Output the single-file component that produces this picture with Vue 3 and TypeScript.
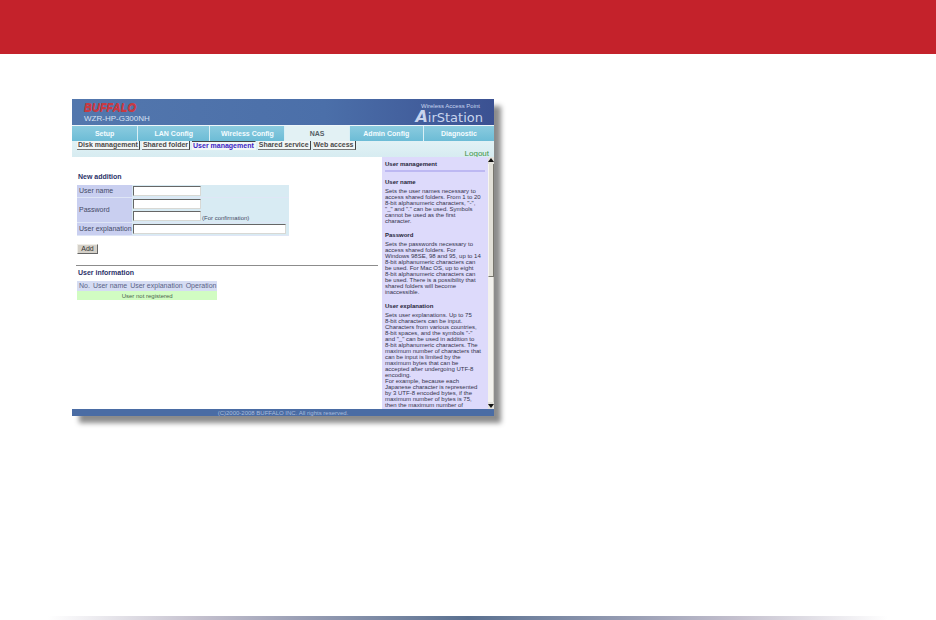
<script setup lang="ts">
import { ref } from 'vue'

interface HelpSection {
  title: string
  text: string
}

const tabs: string[] = ['Setup', 'LAN Config', 'Wireless Config', 'NAS', 'Admin Config', 'Diagnostic']
const activeTab = ref('NAS')

const pages: string[] = ['Disk management', 'Shared folder', 'User management', 'Shared service', 'Web access']
const activePage = ref('User management')

const columns: string[] = ['No.', 'User name', 'User explanation', 'Operation']

const userName = ref('')
const password = ref('')
const confirmation = ref('')
const explanation = ref('')

const help: HelpSection[] = [
  {
    title: 'User name',
    text: `Sets the user names necessary to
access shared folders. From 1 to 20
8-bit alphanumeric characters, "-",
"_" and "." can be used. Symbols
cannot be used as the first
character.`,
  },
  {
    title: 'Password',
    text: `Sets the passwords necessary to
access shared folders. For
Windows 98SE, 98 and 95, up to 14
8-bit alphanumeric characters can
be used. For Mac OS, up to eight
8-bit alphanumeric characters can
be used. There is a possibility that
shared folders will become
inaccessible.`,
  },
  {
    title: 'User explanation',
    text: `Sets user explanations. Up to 75
8-bit characters can be input.
Characters from various countries,
8-bit spaces, and the symbols "-"
and "_" can be used in addition to
8-bit alphanumeric characters. The
maximum number of characters that
can be input is limited by the
maximum bytes that can be
accepted after undergoing UTF-8
encoding.
For example, because each
Japanese character is represented
by 3 UTF-8 encoded bytes, if the
maximum number of bytes is 75,
then the maximum number of`,
  },
]
</script>

<template>
  <div class="page">
    <div class="banner"></div>
    <main class="content">
      <section class="window">
        <header class="head">
          <div class="brand">
            <strong class="buffalo">BUFFALO</strong>
            <span class="model">WZR-HP-G300NH</span>
          </div>
          <div class="product">
            <span class="tagline">Wireless Access Point</span>
            <span class="airstation"><i>A</i>irStation</span>
          </div>
        </header>
        <nav class="tabs">
          <a v-for="tab in tabs" :key="tab" href="#" :class="{ active: tab === activeTab }" @click.prevent="activeTab = tab">{{ tab }}</a>
        </nav>
        <div class="subbar">
          <nav class="pages">
            <a v-for="item in pages" :key="item" href="#" :class="{ active: item === activePage }" @click.prevent="activePage = item">{{ item }}</a>
          </nav>
          <a class="logout" href="#">Logout</a>
        </div>
        <div class="body">
          <div class="panel">
            <form @submit.prevent>
              <h2>New addition</h2>
              <table class="fields">
                <tbody>
                  <tr>
                    <th><label for="user-name">User name</label></th>
                    <td><div class="line"><input id="user-name" v-model="userName" type="text" /></div></td>
                  </tr>
                  <tr>
                    <th><label for="password">Password</label></th>
                    <td>
                      <div class="line"><input id="password" v-model="password" type="password" /></div>
                      <div class="line">
                        <input id="confirmation" v-model="confirmation" type="password" />
                        <label class="note" for="confirmation">(For confirmation)</label>
                      </div>
                    </td>
                  </tr>
                  <tr>
                    <th><label for="explanation">User explanation</label></th>
                    <td><div class="line"><input id="explanation" v-model="explanation" class="wide" type="text" /></div></td>
                  </tr>
                </tbody>
              </table>
              <button type="submit">Add</button>
            </form>
            <section class="info">
              <h2>User information</h2>
              <table class="users">
                <thead>
                  <tr><th v-for="column in columns" :key="column">{{ column }}</th></tr>
                </thead>
                <tbody>
                  <tr><td :colspan="columns.length">User not registered</td></tr>
                </tbody>
              </table>
            </section>
          </div>
          <aside class="help">
            <h2>User management</h2>
            <section v-for="section in help" :key="section.title">
              <h3>{{ section.title }}</h3>
              <p>{{ section.text }}</p>
            </section>
          </aside>
          <div class="scroll">
            <svg viewBox="0 0 6 7"><path d="M3 1 L6 5 H0 Z" /></svg>
            <div class="thumb"></div>
            <div class="track"></div>
            <svg viewBox="0 0 6 7"><path d="M3 6 L6 2 H0 Z" /></svg>
          </div>
        </div>
        <footer class="foot">(C)2000-2008 BUFFALO INC. All rights reserved.</footer>
      </section>
    </main>
    <div class="rule"></div>
  </div>
</template>

<style>
body {
  background: #fff;
}
</style>

<style scoped>
.page {
  min-height: 100vh;
  display: flex;
  flex-direction: column;
  font-family: "Liberation Sans", Arial, sans-serif;
  font-size: 7px;
  line-height: 8px;
  color: #444a66;
}
.page *,
.page {
  box-sizing: border-box;
}
a {
  text-decoration: none;
}
h2,
h3,
p {
  margin: 0;
}
h2 {
  font-size: 7px;
  line-height: 8px;
  color: #2b3168;
}
.banner {
  height: 54px;
  background: #c4222b;
}
.content {
  flex: 1;
  display: grid;
  grid-template-columns: 211fr 221fr;
  align-items: start;
  padding: 45px 0 45px 72px;
}
.window {
  background: #fff;
  box-shadow: 7px 7px 5px #8c8c8c;
}
.head {
  height: 26px;
  display: flex;
  justify-content: space-between;
  padding: 2px 11px 0 12px;
  background: linear-gradient(90deg, #5377ad, #4b6fa9 60%, #3b5192);
}
.brand,
.product {
  display: flex;
  flex-direction: column;
}
.buffalo {
  font-size: 11px;
  line-height: 12px;
  font-style: italic;
  color: #c83a42;
  text-shadow: 0 1px #c83a42;
}
.model {
  font-size: 8px;
  line-height: 11px;
  color: #d5e0f2;
}
.product {
  align-items: flex-end;
  color: #c8d4ee;
}
.tagline {
  font-size: 6px;
  line-height: 10px;
  padding-right: 3px;
}
.airstation {
  font-family: "DejaVu Sans", sans-serif;
  font-size: 13px;
  line-height: 12px;
}
.airstation i {
  font-size: 16px;
  font-weight: bold;
}
.tabs {
  height: 15px;
  display: grid;
  grid-template-columns: 66fr 72fr 75fr 64fr 74fr 71fr;
  column-gap: 1px;
  border-top: 1px solid #eef6fa;
  background: #d9eff5;
}
.tabs a {
  line-height: 15px;
  text-align: center;
  font-weight: bold;
  color: #f4fcff;
  background: linear-gradient(#8bcbdf, #6cbcd6);
}
.tabs a.active {
  color: #555e66;
  background: #e2f1f4;
}
.subbar {
  height: 17px;
  display: flex;
  flex-direction: column;
  padding: 1px 5px 0;
  background: linear-gradient(#e2f2f6, #d7ecf1);
}
.pages {
  display: flex;
  gap: 2px;
}
.pages a {
  height: 9px;
  padding: 0 1px;
  font-weight: bold;
  white-space: nowrap;
  color: #4a4a4a;
  background: #f2f6f6;
  border-right: 1px solid #444;
  border-bottom: 1px solid #777;
}
.pages a.active {
  color: #3a22c4;
  border-right-color: transparent;
  border-bottom: 0;
  border-top: 1px solid #444;
}
.logout {
  align-self: flex-end;
  font-size: 8px;
  line-height: 8px;
  color: #3f9447;
}
.body {
  height: 252px;
  display: grid;
  grid-template-columns: minmax(0, 1fr) 106px 6px;
}
.panel {
  padding: 16px 4px 0;
}
.panel form {
  padding-left: 1px;
}
.panel h2 {
  padding-left: 1px;
}
table {
  border-collapse: collapse;
}
th,
td {
  padding: 0;
}
th {
  font-weight: normal;
  text-align: left;
}
.fields {
  margin-top: 4px;
}
.fields tr {
  border-bottom: 1px solid #dfe6f6;
}
.fields th {
  width: 55px;
  padding-left: 2px;
  background: #c9cff0;
}
.fields td {
  width: 157px;
  padding-left: 1px;
  background: #d8ebf3;
}
.line {
  height: 12px;
  display: flex;
  align-items: center;
}
input {
  width: 68px;
  height: 10px;
  padding: 0 1px;
  border: 1px solid #d8d8d4;
  border-top-color: #666;
  border-left-color: #666;
  border-radius: 0;
  font: inherit;
  background: #fff;
  outline: none;
}
input.wide {
  width: 153px;
}
.note {
  font-size: 6px;
  padding: 3px 0 0 1px;
}
button {
  display: block;
  width: 21px;
  height: 10px;
  margin-top: 8px;
  padding: 0;
  border: 1px solid #f0eee8;
  border-right-color: #666;
  border-bottom-color: #666;
  font: inherit;
  line-height: 8px;
  color: #333;
  background: #d4d0c8;
}
.info {
  margin-top: 11px;
  padding: 3px 0 0 1px;
  border-top: 1px solid #8c8c8c;
}
.users {
  width: 140px;
  margin-top: 4px;
}
.users th {
  height: 10px;
  padding: 0 1px 0 2px;
  white-space: nowrap;
  color: #5a6386;
  background: #d5dcf3;
}
.users td {
  height: 9px;
  font-size: 6px;
  text-align: center;
  color: #4c6650;
  background: #d1fcc2;
}
.help {
  overflow: hidden;
  padding: 3px 0 0 3px;
  color: #34344c;
  background: #dddafb;
}
.help h2 {
  font-size: 6px;
  color: #26263a;
  margin-right: 3px;
  padding-bottom: 2px;
  border-bottom: 2px solid #bdb8f2;
}
.help section {
  padding: 6px 0 1px;
}
.help h3 {
  font-size: 6px;
  line-height: 8px;
  color: #26263a;
  margin-bottom: 2px;
}
.help p {
  font-size: 6px;
  line-height: 6px;
  white-space: pre;
}
.scroll {
  display: flex;
  flex-direction: column;
  background: #e4e2dc;
}
.scroll svg {
  display: block;
  width: 6px;
  height: 7px;
  fill: #111;
}
.thumb {
  height: 113px;
  background: #e2e0d8;
  border-left: 1px solid #f6f5f0;
  border-right: 1px solid #77756e;
  border-bottom: 1px solid #77756e;
}
.track {
  flex: 1;
  background: #f3f2ee;
  border-right: 1px solid #d0cec8;
}
.foot {
  height: 7px;
  font-size: 6px;
  line-height: 8px;
  text-align: center;
  color: #a9bcdc;
  background: #4a6ca4;
}
.rule {
  height: 4px;
  margin: 0 48px;
  background: linear-gradient(90deg, #fff, #c4c0ce 18%, #9a9fb5 30%, #7484a0 42%, #5a7090 50%, #7484a0 58%, #9a9fb5 70%, #c4c0ce 82%, #fff);
}
</style>
